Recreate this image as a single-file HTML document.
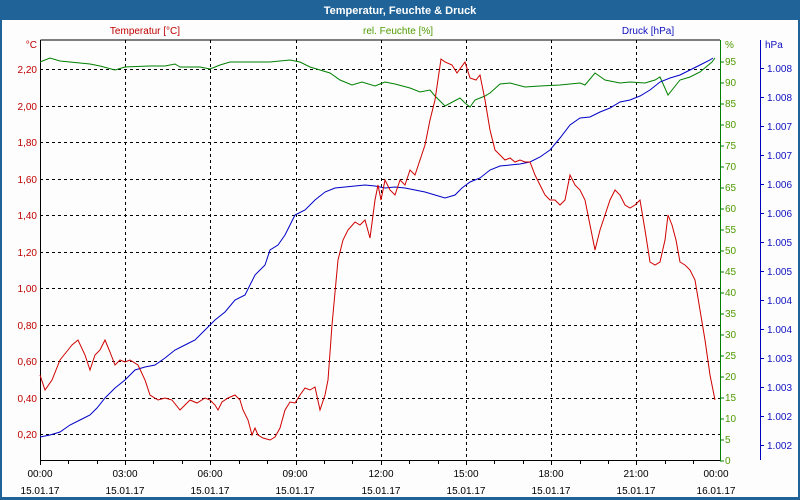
<!DOCTYPE html>
<html><head><meta charset="utf-8"><style>
html,body{margin:0;padding:0;width:800px;height:500px;overflow:hidden;background:#fff}
svg{display:block;font-family:"Liberation Sans",Tahoma,sans-serif;font-size:10px}
</style></head><body>
<svg width="800" height="500" viewBox="0 0 800 500" xmlns="http://www.w3.org/2000/svg">
<rect x="0" y="0" width="800" height="500" fill="#1f6398"/>
<rect x="2" y="20" width="796" height="477" fill="#fcfdfc"/>
<text x="400" y="14" text-anchor="middle" fill="#fff" font-weight="bold" font-size="11">Temperatur, Feuchte &amp; Druck</text>
<text x="145" y="34" text-anchor="middle" fill="#c00000">Temperatur [°C]</text>
<text x="398" y="34" text-anchor="middle" fill="#4f9a00">rel. Feuchte [%]</text>
<text x="648" y="34" text-anchor="middle" fill="#1010c0">Druck [hPa]</text>
<g stroke="#000" stroke-dasharray="3,3" stroke-width="1">
<path d="M125.5 40V460M210.5 40V460M296.5 40V460M381.5 40V460M466.5 40V460M551.5 40V460M636.5 40V460"/>
<path d="M40 69.5H720M40 106.5H720M40 142.5H720M40 179.5H720M40 215.5H720M40 252.5H720M40 288.5H720M40 325.5H720M40 361.5H720M40 398.5H720M40 434.5H720"/>
</g>
<path d="M40.5 40V460.5H720" stroke="#000" fill="none"/>
<path d="M40.5 40H720" stroke="#000"/>
<g stroke="#000"><path d="M40.5 461v4M68.5 461v3M97.5 461v3M125.5 461v4M153.5 461v3M182.5 461v3M210.5 461v4M239.5 461v3M267.5 461v3M296.5 461v4M324.5 461v3M352.5 461v3M381.5 461v4M409.5 461v3M438.5 461v3M466.5 461v4M494.5 461v3M523.5 461v3M551.5 461v4M580.5 461v3M608.5 461v3M636.5 461v4M665.5 461v3M693.5 461v3"/></g>
<g fill="#c00000" text-anchor="end">
<text x="37" y="48">°C</text><text x="37" y="73">2,20</text><text x="37" y="110">2,00</text><text x="37" y="146">1,80</text><text x="37" y="183">1,60</text><text x="37" y="219">1,40</text><text x="37" y="256">1,20</text><text x="37" y="292">1,00</text><text x="37" y="329">0,80</text><text x="37" y="365">0,60</text><text x="37" y="402">0,40</text><text x="37" y="438">0,20</text>
</g>
<g fill="#000" text-anchor="middle">
<text x="40" y="477">00:00</text><text x="125" y="477">03:00</text><text x="210" y="477">06:00</text><text x="295" y="477">09:00</text><text x="381" y="477">12:00</text><text x="466" y="477">15:00</text><text x="551" y="477">18:00</text><text x="636" y="477">21:00</text><text x="716" y="477">00:00</text>
<text x="40" y="494">15.01.17</text><text x="125" y="494">15.01.17</text><text x="210" y="494">15.01.17</text><text x="295" y="494">15.01.17</text><text x="381" y="494">15.01.17</text><text x="466" y="494">15.01.17</text><text x="551" y="494">15.01.17</text><text x="636" y="494">15.01.17</text><text x="716" y="494">16.01.17</text>
</g>
<path d="M720.5 40V461" stroke="#008000"/>
<g stroke="#008000"><path d="M720 461h4M720 440h4M720 419h4M720 398h4M720 377h4M720 356h4M720 335h4M720 314h4M720 293h4M720 272h4M720 251h4M720 230h4M720 209h4M720 188h4M720 167h4M720 146h4M720 125h4M720 104h4M720 83h4M720 62h4"/></g>
<g fill="#4f9a00">
<text x="725" y="48">%</text><text x="725" y="65">95</text><text x="725" y="86">90</text><text x="725" y="107">85</text><text x="725" y="128">80</text><text x="725" y="149">75</text><text x="725" y="170">70</text><text x="725" y="191">65</text><text x="725" y="212">60</text><text x="725" y="233">55</text><text x="725" y="254">50</text><text x="725" y="275">45</text><text x="725" y="296">40</text><text x="725" y="317">35</text><text x="725" y="338">30</text><text x="725" y="359">25</text><text x="725" y="380">20</text><text x="725" y="401">15</text><text x="725" y="422">10</text><text x="725" y="443">5</text><text x="725" y="464">0</text>
</g>
<path d="M760.5 40V460" stroke="#0000c0"/>
<g stroke="#0000c0"><path d="M760 68.5h4M760 97.5h4M760 126.5h4M760 155.5h4M760 184.5h4M760 213.5h4M760 242.5h4M760 271.5h4M760 300.5h4M760 329.5h4M760 358.5h4M760 387.5h4M760 416.5h4M760 445.5h4"/></g>
<g fill="#1010c0">
<text x="765" y="48">hPa</text><text x="767" y="72">1.008</text><text x="767" y="101">1.008</text><text x="767" y="130">1.007</text><text x="767" y="159">1.007</text><text x="767" y="188">1.006</text><text x="767" y="217">1.006</text><text x="767" y="246">1.005</text><text x="767" y="275">1.005</text><text x="767" y="304">1.004</text><text x="767" y="333">1.004</text><text x="767" y="362">1.003</text><text x="767" y="391">1.003</text><text x="767" y="420">1.002</text><text x="767" y="449">1.002</text>
</g>
<polyline fill="none" stroke="#008000" points="40,62 50,58 60,61 70,62 80,63 90,64 100,66 115,70 125,67 150,66 165,66 175,64 180,67 200,67 210,69 220,65 230,62 250,62 270,62 290,60 300,62 310,67 320,70 330,73 340,80 352,85 362,82 375,86 385,82 395,84 410,88 420,92 430,90 435,96 445,106 460,98 465,103 470,107 475,100 485,96 490,93 500,84 510,83 525,87 540,86 560,85 580,83 585,85 595,73 605,80 620,83 630,82 645,83 655,80 660,77 668,95 680,80 690,77 700,72 712,62 715,58"/>
<polyline fill="none" stroke="#0000c8" points="40,437 50,435 60,432 70,425 80,420 90,415 97,408 105,398 115,388 125,380 130,375 135,370 145,367 155,365 165,358 175,350 185,345 195,340 205,330 215,320 225,312 235,300 245,295 255,275 265,265 270,250 278,245 285,235 290,225 295,215 305,210 315,200 325,192 335,188 345,187 355,186 365,185 375,186 385,188 395,187 405,188 415,190 425,192 435,195 445,198 455,195 462,188 470,182 480,178 490,170 500,166 510,165 520,164 530,162 540,157 550,150 560,138 570,125 580,118 590,117 600,112 610,108 620,102 630,100 640,96 650,90 660,82 670,78 680,75 690,70 700,65 710,60 713,58"/>
<polyline fill="none" stroke="#d00000" points="40,375 45,390 52,380 60,360 68,350 72,345 78,340 85,355 90,370 95,355 100,350 105,340 110,352 115,365 120,360 125,362 130,360 138,365 145,380 150,395 158,400 165,398 172,400 180,410 185,405 190,400 197,403 205,398 210,400 215,405 218,410 222,402 228,398 235,395 240,400 243,410 248,420 252,435 255,428 258,435 263,438 270,440 275,437 280,428 285,410 290,402 295,403 300,395 305,388 310,390 315,387 320,410 325,395 328,380 332,325 338,260 343,240 348,230 355,222 360,225 365,220 370,238 375,200 378,185 381,200 385,180 390,190 395,195 400,180 405,185 410,170 415,175 420,160 425,145 430,120 435,100 441,59 445,62 452,65 457,73 465,62 470,78 476,80 480,75 485,100 490,130 495,150 500,155 505,160 510,158 515,162 520,160 525,162 530,162 535,175 540,185 545,195 550,200 555,200 560,205 565,200 570,175 575,185 580,190 585,200 590,225 595,250 600,230 605,215 610,200 615,190 620,195 625,205 630,208 635,205 640,200 645,230 650,262 655,265 660,262 665,240 668,215 672,225 676,240 680,262 685,265 690,270 695,280 700,310 705,340 710,375 715,400"/>
</svg>
</body></html>
